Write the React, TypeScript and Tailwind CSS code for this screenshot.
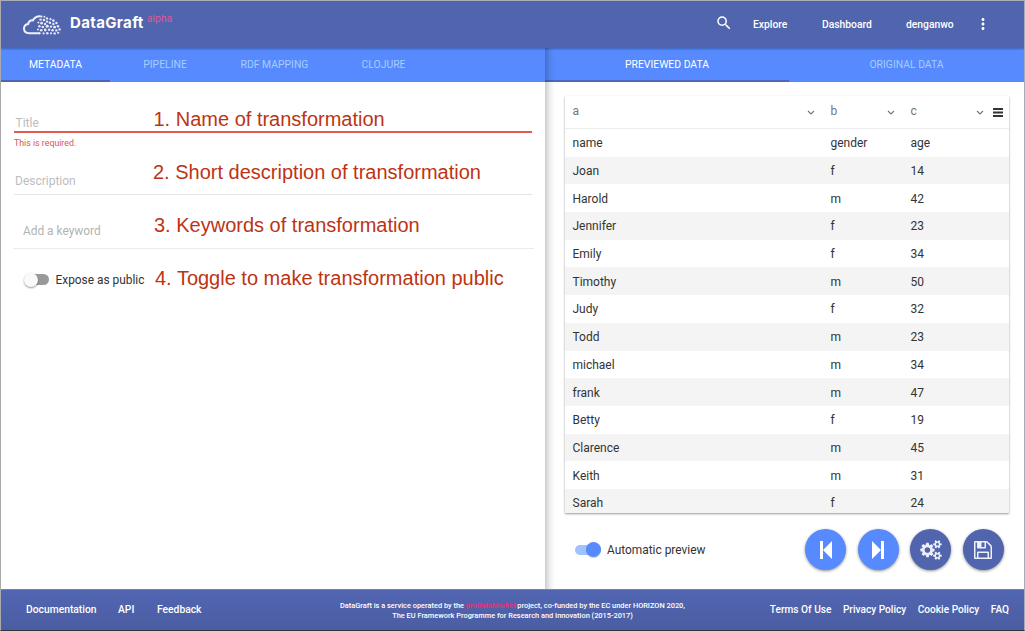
import { MdMoreVert, MdSearch } from 'react-icons/md';
import type { ReactNode } from 'react';

const rows = [
  ['name', 'gender', 'age'],
  ['Joan', 'f', '14'],
  ['Harold', 'm', '42'],
  ['Jennifer', 'f', '23'],
  ['Emily', 'f', '34'],
  ['Timothy', 'm', '50'],
  ['Judy', 'f', '32'],
  ['Todd', 'm', '23'],
  ['michael', 'm', '34'],
  ['frank', 'm', '47'],
  ['Betty', 'f', '19'],
  ['Clarence', 'm', '45'],
  ['Keith', 'm', '31'],
  ['Sarah', 'f', '24'],
];

// x, y, radius of the dots that fill the right half of the cloud
const dots = [
  [18.4, 1.6, 1.1], [21.4, 1.8, 1], [24, 3.4, 1.2], [17.5, 4.6, 1.2], [20.9, 5, 1.3], [24, 6.6, 1.2],
  [27.5, 4.2, 1.1], [30.4, 5.6, 1.3], [15.4, 7.6, 1], [18.6, 8.2, 1.4], [22, 9, 1.2], [26.9, 7.8, 1.3],
  [30.3, 9, 1.2], [33.4, 8, 1.2], [16.4, 11.2, 1.2], [19.8, 12, 1.3], [24.2, 11.2, 1.6],
  [28, 11.6, 1.2], [31.6, 12.2, 1.4], [35, 11.2, 1.3], [15, 14.4, 1], [18.2, 15.2, 1.3],
  [22.2, 15, 1.4], [26.1, 14.8, 1.2], [29.6, 15.2, 1.3], [33.4, 15.4, 1.2], [36.6, 14.4, 1.2],
  [16.4, 18.2, 1.2], [20.6, 18.4, 1.1], [24.3, 18.2, 1.3], [28, 18.3, 1.1], [31.7, 18.4, 1.2], [35.2, 17.8, 1.1],
];

function Logo() {
  return (
    <svg className="h-5 w-[39px] shrink-0" viewBox="0 0 39 20" fill="none">
      <path
        d="M15 18.2H6.2C3 18.2 1 16.3 1 13.6c0-2.8 2-4.4 4.2-4.7C5.5 6.6 7.4 5 10 5.4 11.3 2.8 13.8 1.2 17 1.3"
        stroke="#eef0fa"
        strokeWidth="2"
        strokeLinecap="round"
      />
      {dots.map(([x, y, r]) => (
        <circle key={`${x}-${y}`} cx={x} cy={y} r={r} fill="#e6e9f6" />
      ))}
    </svg>
  );
}

const smallGear =
  'M1920 1338v140q0 16-149 31-12 27-30 52 51 113 51 138 0 4-4 7-122 71-124 71-8 0-46-47t-52-68q-20 2-30 2t-30-2q-14 21-52 68t-46 47q-2 0-124-71-4-3-4-7 0-25 51-138-18-25-30-52-149-15-149-31v-140q0-16 149-31 13-29 30-52-51-113-51-138 0-4 4-7 4-2 35-20t59-34 30-16q8 0 46 46.5t52 67.5q20-2 30-2t30 2q51-71 92-112l6-2q4 0 124 70 4 3 4 7 0 25-51 138 17 23 30 52 149 15 149 31zM1664 1408q0-52-38-90t-90-38-90 38-38 90q0 53 37.5 90.5t90.5 37.5 90.5-37.5 37.5-90.5z';

function Gears() {
  return (
    <svg className="h-[20px] w-[22px]" viewBox="0 0 1920 1792" fill="#edf0fa" fillRule="evenodd">
      <path d="M896 896q0-106-75-181t-181-75-181 75-75 181 75 181 181 75 181-75 75-181zM1280 805v185q0 10-7 19.5t-16 10.5l-155 24q-11 35-32 76 34 48 90 115 7 11 7 20 0 12-7 19-23 30-82.5 89.5t-78.5 59.5q-11 0-21-7l-115-90q-37 19-77 31-11 108-23 155-7 24-30 24h-186q-11 0-20-7.5t-10-17.5l-23-153q-34-10-75-31l-118 89q-7 7-20 7-11 0-21-8-144-133-144-160 0-9 7-19 10-14 41-53t47-61q-23-44-35-82l-152-24q-10-1-17-9.5t-7-19.5v-185q0-10 7-19.5t16-10.5l155-24q11-35 32-76-34-48-90-115-7-11-7-20 0-12 7-20 22-30 82-89t79-59q11 0 21 7l115 90q34-18 77-32 11-108 23-154 7-24 30-24h186q11 0 20 7.5t10 17.5l23 153q34 10 75 31l118-89q8-7 20-7 11 0 21 8 144 133 144 160 0 8-7 19-12 16-42 54t-45 60q23 48 34 82l152 23q10 2 17 10.5t7 19.5z" />
      <path d={smallGear} />
      <path d={smallGear} transform="translate(0 -1024)" />
    </svg>
  );
}

function Chevron() {
  return (
    <svg className="mt-[3px] h-[5px] w-[8px]" viewBox="0 0 8 5" fill="none">
      <path d="M1 1l3 3 3-3" stroke="#757575" strokeWidth="1.1" />
    </svg>
  );
}

function HeaderCell({ label, width, gap }: { label: string; width: string; gap: string }) {
  return (
    <div className={`flex items-center justify-between ${width} ${gap}`}>
      <span>{label}</span>
      <Chevron />
    </div>
  );
}

function RoundButton({ color, label, children }: { color: string; label: string; children: ReactNode }) {
  return (
    <button
      aria-label={label}
      className={`flex size-[41px] items-center justify-center rounded-full text-white shadow-[0_1px_3px_rgba(0,0,0,0.45)] ${color}`}
    >
      {children}
    </button>
  );
}

function Note({ children, className }: { children: ReactNode; className: string }) {
  return (
    <span className={`whitespace-nowrap font-['Liberation_Sans',sans-serif] text-[20px] leading-6 text-[#bd3413] ${className}`}>
      {children}
    </span>
  );
}

export default function App() {
  return (
    <div className="flex h-[631px] w-[1025px] flex-col overflow-hidden border-t border-r border-b border-l border-t-[#aaaeb8] border-r-[#aaa9b5] border-b-[#30343f] border-l-[#aaaaaa] bg-white font-[Roboto,sans-serif] text-[12px] text-[#333]">
      <header className="relative z-20 flex h-[47px] shrink-0 items-center bg-[#5164ae] text-white shadow-[0_1px_2px_rgba(0,0,0,0.3)]">
        <div className="flex w-[714px] items-center pl-[22px]">
          <Logo />
          <span className="ml-2 w-[77px] pb-[3px] font-[Inter,sans-serif] text-[15px] leading-5 font-bold tracking-[0.35px]">DataGraft</span>
          <span className="pb-[12px] font-[Inter,sans-serif] text-[9.5px] leading-3 tracking-[0.2px] text-[#e75591]">alpha</span>
        </div>
        <MdSearch className="mb-[3px] size-[18px]" />
        <nav className="flex items-center text-[10.3px] font-medium">
          <span className="ml-[20px] w-[69px]">Explore</span>
          <span className="w-[84px]">Dashboard</span>
          <span className="w-[67.5px]">denganwo</span>
          <MdMoreVert className="mb-px size-[18px]" />
        </nav>
      </header>

      <div className="flex min-h-0 flex-1">
        <section className="flex w-[544px] shrink-0 flex-col">
          <div className="flex h-[34px] shrink-0 bg-[#568afe] text-center text-[10.4px] leading-[33px] text-[#a5cdfe]">
            <span className="w-[109px] border-b-2 border-[#5164ae] text-white">METADATA</span>
            <span className="w-[110px]">PIPELINE</span>
            <span className="w-[109px]">RDF MAPPING</span>
            <span className="w-[109px]">CLOJURE</span>
          </div>
          <div className="flex flex-col pr-3 pl-[13px]">
            <div className="mr-px flex h-[51px] items-end border-b-2 border-[#e2594f] pl-[1.5px]">
              <span className="w-[138px] leading-4 text-[#bdbdbd]">Title</span>
              <Note className="">1. Name of transformation</Note>
            </div>
            <p className="h-[24px] pt-[4px] text-[8.8px] leading-3 text-[#dc5350]">This is required.</p>
            <div className="mr-px flex h-[38px] border-b border-[#e4e4e4] pl-px">
              <span className="w-[138px] pt-4 leading-4 text-[#bdbdbd]">Description</span>
              <Note className="pt-[3px]">2. Short description of transformation</Note>
            </div>
            <div className="-mx-px flex h-[54px] border-b border-[#ebebeb] pl-[10px]">
              <span className="w-[131px] pt-7 text-[11.9px] leading-4 text-[#b3b3b3]">Add a keyword</span>
              <Note className="pt-[18px]">3. Keywords of transformation</Note>
            </div>
            <div className="flex pt-[17px] pl-[10px]">
              <span className="mt-[8px] flex h-[11px] w-[25px] items-center rounded-full bg-gradient-to-r from-transparent from-30% to-[#999] to-30%">
                <span className="size-[14px] shrink-0 rounded-full bg-[#fafafa] shadow-[0_1px_2px_rgba(0,0,0,0.4)]" />
              </span>
              <span className="ml-[6.5px] w-[99.5px] pt-[6px] text-[11.9px] leading-4">Expose as public</span>
              <Note className="">4. Toggle to make transformation public</Note>
            </div>
          </div>
        </section>

        <section className="relative z-10 flex min-w-0 flex-1 flex-col">
          <div className="pointer-events-none absolute inset-y-0 left-0 w-[10px] bg-gradient-to-r from-black/20 via-black/6 to-transparent" />
          <div className="flex h-[34px] shrink-0 bg-[#568afe] text-center text-[10.4px] leading-[33px] text-[#a5cdfe]">
            <span className="w-[244px] border-b-2 border-[#4a69bd] text-white">PREVIEWED DATA</span>
            <span className="w-[235px]">ORIGINAL DATA</span>
          </div>
          <div className="mt-[14px] ml-5 h-[417px] w-[444px] shrink-0 overflow-hidden bg-white shadow-[0_1px_2px_rgba(0,0,0,0.4)]">
            <div className="flex h-[33px] items-center border-b border-[#ececec] pb-[2px] pl-[7.5px] text-[#757575]">
              <HeaderCell label="a" width="w-[242px]" gap="mr-4" />
              <HeaderCell label="b" width="w-[64px]" gap="mr-4" />
              <HeaderCell label="c" width="w-[73px]" gap="mr-[9px]" />
              <svg className="mt-[2px] h-[9px] w-[10px]" viewBox="0 0 10 9" fill="#333">
                <path d="M0 0h10v2H0zM0 3.5h10v2H0zM0 7h10v2H0z" />
              </svg>
            </div>
            {rows.map(([name, gender, age], i) => (
              <div key={name} className={`flex h-[27.7px] items-center pt-px pl-[7.5px] leading-4 ${i % 2 ? 'bg-[#f4f4f4]' : 'bg-white'}`}>
                <span className="w-[258px]">{name}</span>
                <span className="w-[80px]">{gender}</span>
                <span>{age}</span>
              </div>
            ))}
          </div>
          <div className="flex items-center pt-[16px] pl-[30px]">
            <span className="flex h-[10px] w-[26px] items-center justify-end rounded-full bg-[#a0c2ff]">
              <span className="size-[15px] shrink-0 rounded-full bg-[#568afe] shadow-[0_1px_1px_rgba(0,0,0,0.2)]" />
            </span>
            <span className="ml-[6px] w-[198px] text-[11.9px] leading-4">Automatic preview</span>
            <div className="flex gap-[11.5px]">
              <RoundButton color="bg-[#568afe]" label="First">
                <svg className="h-[18px] w-[12px]" viewBox="0 0 12 18" fill="currentColor">
                  <path d="M0 0h3v18H0zM12 0v18L3 9z" />
                </svg>
              </RoundButton>
              <RoundButton color="bg-[#568afe]" label="Last">
                <svg className="h-[18px] w-[12px]" viewBox="0 0 12 18" fill="currentColor">
                  <path d="M9 0h3v18H9zM0 0v18l9-9z" />
                </svg>
              </RoundButton>
              <RoundButton color="bg-[#5164ae]" label="Settings">
                <Gears />
              </RoundButton>
              <RoundButton color="bg-[#5164ae]" label="Save">
                <svg className="size-[18px]" viewBox="0 128 1536 1536" fill="#edf0fa">
                  <path d="M384 1536h768v-384h-768v384zM1280 1536h128v-896q0-14-10-38.5t-20-34.5l-281-281q-10-10-34-20t-39-10v416q0 40-28 68t-68 28h-576q-40 0-68-28t-28-68v-416h-128v1280h128v-416q0-40 28-68t68-28h832q40 0 68 28t28 68v416zM896 608v-320q0-13-9.5-22.5t-22.5-9.5h-192q-13 0-22.5 9.5t-9.5 22.5v320q0 13 9.5 22.5t22.5 9.5h192q13 0 22.5-9.5t9.5-22.5zM1536 640v928q0 40-28 68t-68 28h-1344q-40 0-68-28t-28-68v-1344q0-40 28-68t68-28h928q40 0 88 20t76 48l280 280q28 28 48 76t20 88z" />
                </svg>
              </RoundButton>
            </div>
          </div>
        </section>
      </div>

      <footer className="relative z-20 flex h-[41px] shrink-0 items-center border-t border-[#7882b5] bg-gradient-to-b from-[#5265b2] to-[#4b5da1] whitespace-nowrap text-white">
        <nav className="flex w-[310px] pl-[25px] text-[10.3px] font-medium">
          <span className="w-[92px]">Documentation</span>
          <span className="w-[39px]">API</span>
          <span>Feedback</span>
        </nav>
        <p className="w-[403px] pt-px text-center text-[7.4px] leading-[10px] font-medium">
          DataGraft is a service operated by the <span className="font-bold text-[#e92f79]">proDataMarket</span> project, co-funded by the EC under HORIZON 2020,
          <br />
          The EU Framework Programme for Research and Innovation (2015-2017)
        </p>
        <nav className="flex flex-1 justify-end gap-[11.5px] pr-[15px] text-[10.15px] font-medium">
          <span>Terms Of Use</span>
          <span>Privacy Policy</span>
          <span>Cookie Policy</span>
          <span>FAQ</span>
        </nav>
      </footer>
    </div>
  );
}
